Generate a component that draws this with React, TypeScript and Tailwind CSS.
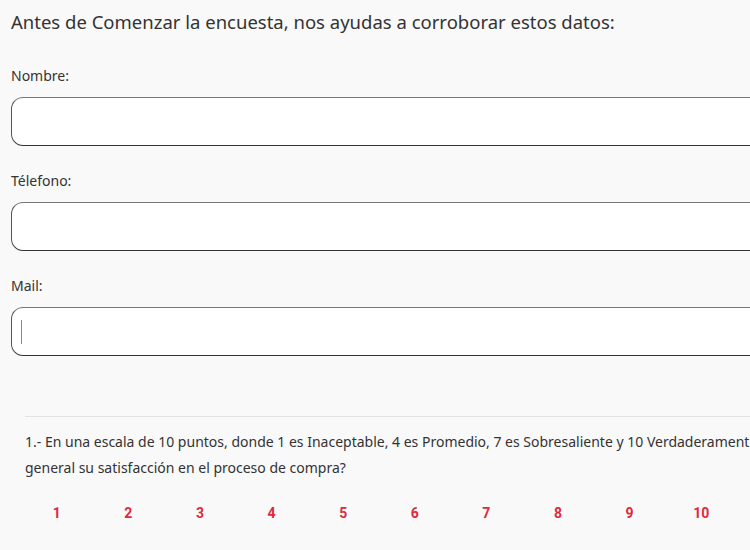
import React from "react";

const nums = [1, 2, 3, 4, 5, 6, 7, 8, 9, 10];

function Field({ label, caret }: { label: string; caret?: boolean }) {
  return (
    <div>
      <div className="text-[14px] leading-[20px] text-[#333] mb-[11px]">{label}</div>
      <div className="h-[49px] w-[900px] rounded-[12px] border border-[#555] border-t-[#777] border-b-[#333] bg-white flex items-center pl-[9px] mb-[25px]">
        {caret ? <div className="w-px h-[24px] bg-[#888]" /> : null}
      </div>
    </div>
  );
}

export default function App() {
  return (
    <div
      className="w-[750px] h-[550px] overflow-hidden bg-[#f9f9f9] text-[#333]"
      style={{ fontFamily: "'Noto Sans', Lato, sans-serif" }}
    >
      <div className="pl-[11px] pt-[8px]">
        <h1 className="text-[18.5px] leading-[28px] font-normal mb-[30px] whitespace-nowrap">
          Antes de Comenzar la encuesta, nos ayudas a corroborar estos datos:
        </h1>
        <Field label="Nombre:" />
        <Field label="Télefono:" />
        <Field label="Mail:" caret />
      </div>
      <div className="ml-[25px] mt-[60px] w-[900px] h-px bg-[#e3e3e3]" />
      <div className="ml-[25px] mt-[12px] text-[14px] leading-[26px] text-[#333] whitespace-nowrap">
        <div>
          1.- En una escala de 10 puntos, donde 1 es Inaceptable, 4 es Promedio, 7 es Sobresaliente y 10 Verdaderamente Excepcional, ¿Cómo calificaría en
        </div>
        <div>general su satisfacción en el proceso de compra?</div>
      </div>
      <div
        className="ml-[21px] mt-[22px] w-[716px] grid grid-cols-10 text-[14px] leading-[20px] font-bold text-[#e0283c]"
        style={{ fontFamily: "Roboto, Inter, sans-serif" }}
      >
        {nums.map((n) => (
          <div key={n} className="text-center">
            {n}
          </div>
        ))}
      </div>
    </div>
  );
}
